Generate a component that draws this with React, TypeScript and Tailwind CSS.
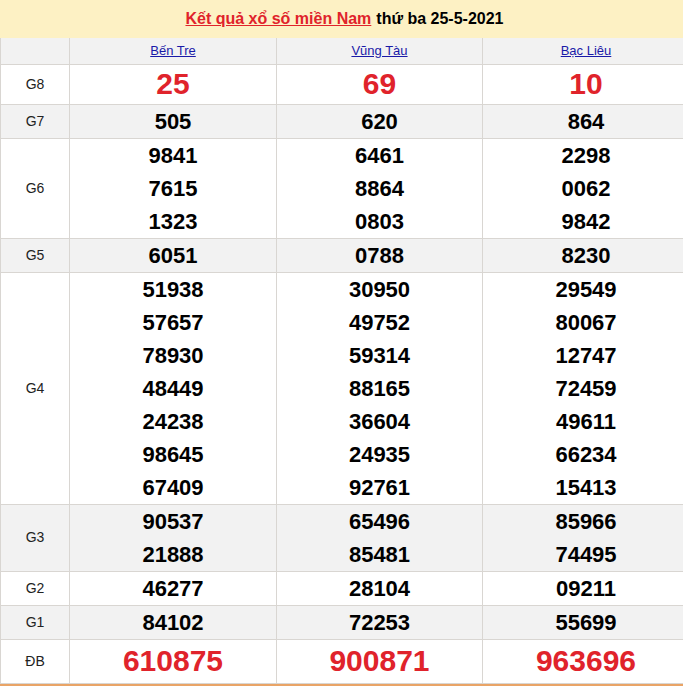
import { memo } from 'react'

interface Prize {
    label: string
    values: string[][]
    big?: boolean
    grey?: boolean
    h?: string
}

const PROVINCES = ['Bến Tre', 'Vũng Tàu', 'Bạc Liêu']

const PRIZES: Prize[] = [
    { label: 'G8', values: [['25'], ['69'], ['10']], big: true, h: 'h-[40px]' },
    { label: 'G7', values: [['505'], ['620'], ['864']], grey: true },
    { label: 'G6', values: [['9841', '7615', '1323'], ['6461', '8864', '0803'], ['2298', '0062', '9842']] },
    { label: 'G5', values: [['6051'], ['0788'], ['8230']], grey: true },
    {
        label: 'G4',
        values: [
            ['51938', '57657', '78930', '48449', '24238', '98645', '67409'],
            ['30950', '49752', '59314', '88165', '36604', '24935', '92761'],
            ['29549', '80067', '12747', '72459', '49611', '66234', '15413'],
        ],
    },
    { label: 'G3', values: [['90537', '21888'], ['65496', '85481'], ['85966', '74495']], grey: true },
    { label: 'G2', values: [['46277'], ['28104'], ['09211']] },
    { label: 'G1', values: [['84102'], ['72253'], ['55699']], grey: true },
    { label: 'ĐB', values: [['610875'], ['900871'], ['963696']], big: true, h: 'h-[44px]' },
]

const PrizeRow = memo(function PrizeRow({ prize }: { prize: Prize }) {
    return (
        <tr className={prize.grey ? 'bg-[#f2f2f2]' : 'bg-white'}>
            <td className={`border border-[#d9d6d2] text-center align-middle text-[14px] text-[#222] ${prize.h ?? ''}`}>
                {prize.label}
            </td>
            {prize.values.map((col, i) => (
                <td key={i} className="border border-[#d9d6d2] text-center align-middle p-0">
                    {col.map((v) =>
                        prize.big ? (
                            <div key={v} className="text-[30px] leading-[38px] font-bold text-[#e0232b]">
                                {v}
                            </div>
                        ) : (
                            <div key={v} className="text-[22px] leading-[33px] font-bold text-black">
                                {v}
                            </div>
                        )
                    )}
                </td>
            ))}
        </tr>
    )
})

export default function App() {
    return (
        <div className="w-[683px] overflow-hidden bg-white" style={{ fontFamily: '"Liberation Sans", Arial, sans-serif' }}>
            <div className="w-[689px] border-b-2 border-[#e9a466]">
                {/* Tiêu đề */}
                <div className="h-[38px] bg-[#fdf1c4] flex items-center justify-center text-[16px] font-bold">
                    <span className="text-[#e0232b] underline">Kết quả xổ số miền Nam</span>
                    <span className="text-black ml-[5px]">thứ ba 25-5-2021</span>
                </div>

                <table className="w-[689px] border-collapse table-fixed">
                    <colgroup>
                        <col className="w-[69px]" />
                        <col className="w-[207px]" />
                        <col className="w-[206px]" />
                        <col className="w-[207px]" />
                    </colgroup>
                    <thead>
                        <tr className="bg-[#f2f2f2] h-[26px]">
                            <th className="border border-[#d9d6d2] border-t-0"></th>
                            {PROVINCES.map((p) => (
                                <th key={p} className="border border-[#d9d6d2] border-t-0 font-normal text-[13px] text-[#1a1aa8] underline">
                                    {p}
                                </th>
                            ))}
                        </tr>
                    </thead>
                    <tbody>
                        {PRIZES.map((p) => (
                            <PrizeRow key={p.label} prize={p} />
                        ))}
                    </tbody>
                </table>
            </div>
        </div>
    )
}
